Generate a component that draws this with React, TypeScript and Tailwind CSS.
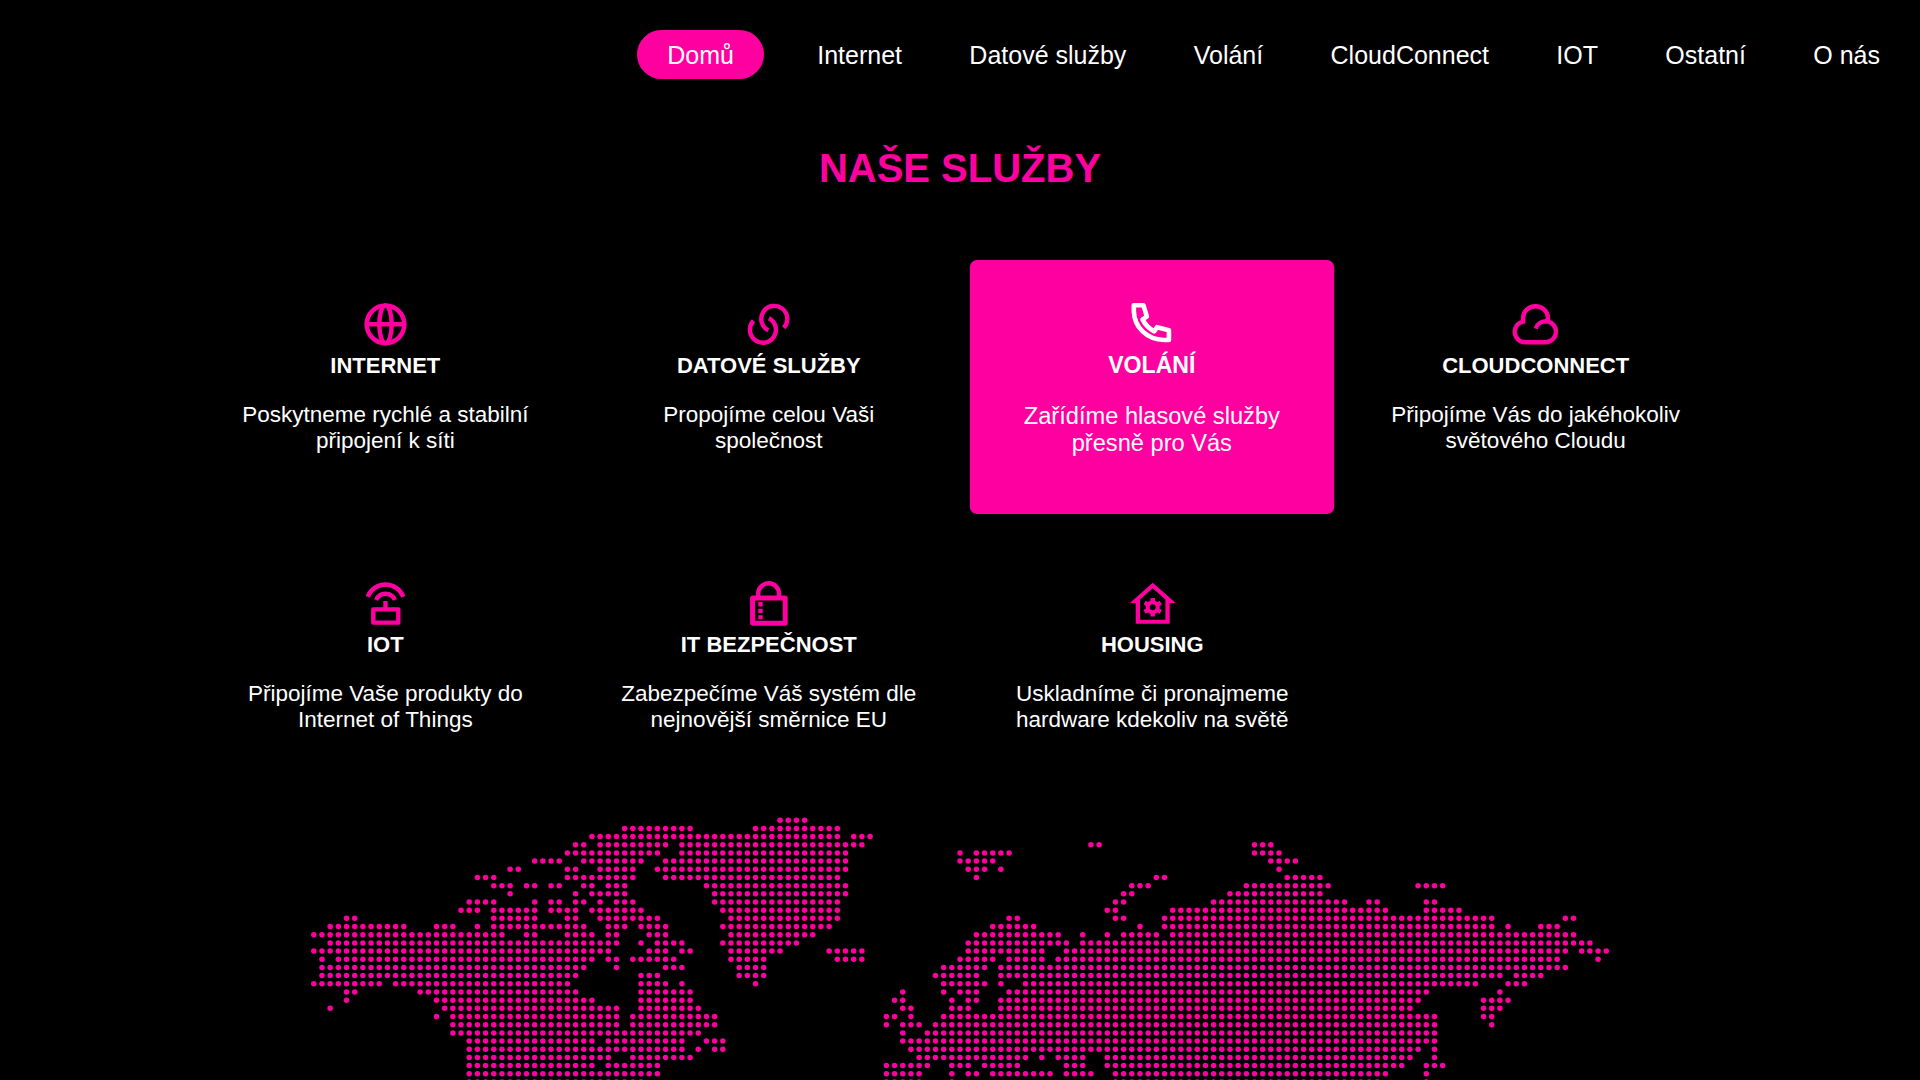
import type { ReactNode } from "react";

const navItems = ["Domů", "Internet", "Datové služby", "Volání", "CloudConnect", "IOT", "Ostatní", "O nás"];

function Icon({ children }: { children: ReactNode }) {
  return (
    <svg
      viewBox="0 0 50 50"
      className="size-[50px] shrink-0"
      fill="none"
      stroke="currentColor"
      strokeWidth="4.4"
      aria-hidden="true"
    >
      {children}
    </svg>
  );
}

const GlobeIcon = () => (
  <Icon>
    <circle cx="25" cy="25.3" r="18.8" strokeWidth="4.6" />
    <ellipse cx="25" cy="25.3" rx="6.2" ry="18.8" />
    <path d="M6 25.3H44" />
  </Icon>
);

const LinkIcon = () => (
  <Icon>
    <path d="M24.8 31.4A13 13 0 1 1 40.2 28.8" />
    <path d="M25.4 19.2A13 13 0 1 1 10 21.8" />
  </Icon>
);

const PhoneIcon = () => (
  <Icon>
    <path
      d="M8.2 10.2H17.4L20.6 21L16.5 23.6C19 28.6 22.9 32.6 27.7 35L30.3 31L41.6 34V43.2H37.1C20.5 43 8.4 31 8.2 15.5Z"
      strokeLinejoin="round"
    />
  </Icon>
);

const CloudIcon = () => (
  <Icon>
    <path d="M25.2 29.6A10.4 10.4 0 0 1 35 22.3A10.45 10.45 0 0 1 35 43.2H14.3A10.4 10.4 0 0 1 12.6 22.6V18.8A12.4 11.5 0 0 1 37.4 18.8V22.4" />
  </Icon>
);

const RouterIcon = () => (
  <Icon>
    <path d="M7.2 18.7A19.1 19.1 0 0 1 42.8 18.7" />
    <path d="M15.6 22A10.2 10.2 0 0 1 34.4 22" />
    <path d="M25 23V31" />
    <rect x="12.8" y="31.4" width="25" height="13.2" strokeLinejoin="round" />
  </Icon>
);

const LockIcon = () => (
  <Icon>
    <path d="M14.7 20V15.7A10.4 10.4 0 0 1 35.5 15.7V20" />
    <rect x="9.1" y="20" width="32.6" height="25.2" rx="0.5" strokeWidth="5" strokeLinejoin="round" />
    <path d="M17 24V28.5M17 30.8V35M17 37.2V41.3" strokeWidth="4.4" />
  </Icon>
);

const HouseIcon = () => (
  <Icon>
    <path
      d="M25.2 4.7L48.2 25H42.2V44.7Q42.2 45.7 41.2 45.7H9.2Q8.2 45.7 8.2 44.7V25H2.5ZM25.2 10.3L12.5 21.4V41.7H37.9V21.4Z"
      fill="currentColor"
      fillRule="evenodd"
      stroke="none"
    />
    <circle cx="25.2" cy="29.3" r="5" strokeWidth="4" />
    <path
      d="M25.2 20V24M25.2 34.6V38.6M17.1 24.7L20.6 26.7M29.8 31.9L33.3 33.9M33.3 24.7L29.8 26.7M20.6 31.9L17.1 33.9"
      strokeWidth="4.4"
    />
  </Icon>
);

type Service = { title: string; lines: [string, string]; icon: ReactNode; active?: boolean };

const services: Service[] = [
  { title: "INTERNET", lines: ["Poskytneme rychlé a stabilní", "připojení k síti"], icon: <GlobeIcon /> },
  { title: "DATOVÉ SLUŽBY", lines: ["Propojíme celou Vaši", "společnost"], icon: <LinkIcon /> },
  { title: "VOLÁNÍ", lines: ["Zařídíme hlasové služby", "přesně pro Vás"], icon: <PhoneIcon />, active: true },
  { title: "CLOUDCONNECT", lines: ["Připojíme Vás do jakéhokoliv", "světového Cloudu"], icon: <CloudIcon /> },
  { title: "IOT", lines: ["Připojíme Vaše produkty do", "Internet of Things"], icon: <RouterIcon /> },
  { title: "IT BEZPEČNOST", lines: ["Zabezpečíme Váš systém dle", "nejnovější směrnice EU"], icon: <LockIcon /> },
  { title: "HOUSING", lines: ["Uskladníme či pronajmeme", "hardware kdekoliv na světě"], icon: <HouseIcon /> },
];

function ServiceCard({ service }: { service: Service }) {
  return (
    <article
      className={
        "flex h-[242px] flex-col items-center rounded-[7px] pt-[33px] text-center " +
        (service.active ? "scale-105 bg-[#ff00a0]" : "")
      }
    >
      <div className={service.active ? "text-white" : "text-[#ff00a0]"}>{service.icon}</div>
      <h3 className={"text-[22px] leading-[25px] font-bold " + (service.active ? "mt-[5px]" : "mt-1")}>
        {service.title}
      </h3>
      <p
        className={
          "text-[22.5px] leading-[26px] whitespace-nowrap " + (service.active ? "mt-[23px]" : "mt-[23.5px]")
        }
      >
        {service.lines[0]}
        <br />
        {service.lines[1]}
      </p>
    </article>
  );
}

// Inclusive column spans of dots for every row of the world map.
const mapRows = [
  "57-60",
  "38-46 54-64",
  "34-64 66-68",
  "32-33 35-43 45-67 95-96 115-117",
  "31-42 45-65 79 81-85 115-118",
  "27-30 33-40 43-65 79-83 117-120",
  "24-25 31-32 35-39 42-65 80-82 84 118",
  "20-22 31-39 43-64 81 103-104 119-123",
  "22-24 26-27 29-30 33-34 36-38 48-65 100-102 114-124 135-138",
  "24 32 34-38 49-65 99-100 112-123",
  "19-22 27 29-30 32-33 35 37-39 49-64 98-99 110-126 129-130 136-137",
  "18-20 22-27 29-32 34-40 50-64 97-98 105-131 136-140",
  "4-5 22-27 31-32 35-42 51-64 85-86 98-99 104-144 153-154",
  "2-11 15-17 20 22-33 36-38 40-43 50-63 83-88 101 104-144 146 150-152",
  "0-23 26-27 31-34 36-37 41-43 51-61 81-91 94 97 99-103 105-154",
  "2-37 40 42-45 50-59 80-92 94-156",
  "0-36 41-43 45-46 51-57 63-67 80-89 92-153 155-158",
  "1 3-34 36-37 39-44 51-55 64-67 79-83 85-89 91-152 157",
  "1-33 37 43-45 52-55 77-82 84-153",
  "1-32 40-42 52-55 76-81 84-145 147-150",
  "0-8 10-31 40-43 45 54 77-82 84 87-142 146-148",
  "4-5 13-32 40-46 72 77 79-81 85-136 145",
  "4 15-34 40-46 71-72 78 80-81 84-135 143-146",
  "2 16-37 40-47 72-73 78-80 84-134 143-145",
  "15 17-37 39-49 70-71 73 77-137 143-144",
  "17-37 39-49 70 72-74 76-137 144",
  "17-47 72 75-137",
  "19-34 36-45 48-50 72-137",
  "19-45 47 49-50 73-135 137",
  "19-36 39-46 74-87 89 91-94 97-134 137",
  "19-34 36-42 70-75 78-80 82-86 92-94 97-133 136-138",
  "19-42 70-74 78 80-81 83-90 92-95 98-131 136",
  "19-40 70-74 78 98-130 136",
];

const STEP = 8.18;

const mapDots = mapRows.flatMap((row, r) =>
  row.split(" ").flatMap((span) => {
    const [from, to = from] = span.split("-").map(Number);
    return Array.from({ length: to - from + 1 }, (_, i) => ({ c: from + i, r }));
  }),
);

function WorldMap() {
  return (
    <svg viewBox="310 810 1300 270" className="mx-auto block h-[270px] w-[1300px] text-[#ff00a0]" aria-hidden="true">
      {mapDots.map(({ c, r }) => (
        <circle key={`${c}-${r}`} cx={313.8 + c * STEP} cy={820.2 + r * STEP} r="2.75" fill="currentColor" />
      ))}
    </svg>
  );
}

export default function App() {
  return (
    <div className="flex h-[1080px] w-[1920px] flex-col overflow-hidden bg-black font-['Liberation_Sans',Arial,sans-serif] text-white">
      <nav className="flex justify-end gap-[7.35px] pt-[30px] pr-[10px]">
        {navItems.map((item, i) => (
          <a
            key={item}
            href="#"
            className={
              "rounded-[25px] px-[30px] pt-[11px] pb-[9px] text-[25px] leading-[29px] whitespace-nowrap " +
              (i === 0 ? "mr-[16px] bg-[#ff00a0]" : "")
            }
          >
            {item}
          </a>
        ))}
      </nav>
      <h2 className="mt-[66px] text-center text-[40px] leading-[46px] font-bold text-[#ff00a0]">NAŠE SLUŽBY</h2>
      <section className="mx-auto mt-[75px] grid w-[1497px] translate-x-[0.5px] grid-cols-4 gap-x-[36.8px] gap-y-[37px]">
        {services.map((service) => (
          <ServiceCard key={service.title} service={service} />
        ))}
      </section>
      <div className="mt-[23px]">
        <WorldMap />
      </div>
    </div>
  );
}
